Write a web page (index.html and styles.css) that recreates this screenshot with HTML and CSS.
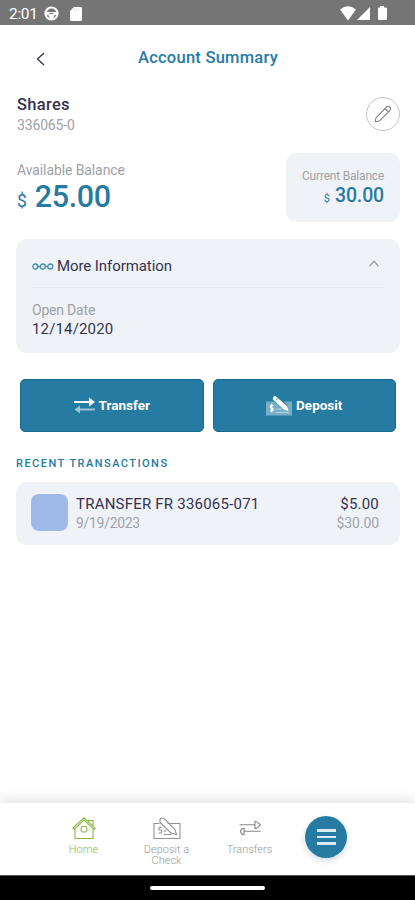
FILE: index.html
```html
<!DOCTYPE html>
<html lang="en">
<head>
<meta charset="utf-8">
<title>Account Summary</title>
<link rel="stylesheet" href="styles.css">
</head>
<body>
<div class="phone">
  <div class="status">
    <span class="clock">2:01</span>
    <svg class="wheel" width="15" height="15" viewBox="0 0 15 15"><circle cx="7.5" cy="7.5" r="6" fill="none" stroke="#fff" stroke-width="2.2"/><path d="M1 6h13v3H10.500L9 13H6L4.500 9H1z" fill="#fff"/><path d="M5.500 7.500h4" stroke="#757575"/></svg>
    <svg class="sd" width="12" height="14" viewBox="0 0 12 14"><path d="M4 0h7q1 0 1 1v12q0 1-1 1H1q-1 0-1-1V4z" fill="#fff"/><path d="M4.500 1.500v2M6.800 1.500v2M9 1.500v2" stroke="#ddd"/></svg>
    <svg class="signals" width="47" height="15" viewBox="0 0 47 15" fill="#fff"><path d="M0 3.500Q8-3 16 3.500L8 14.500z"/><path d="M30 1v13H17z"/><path d="M40 0h4v1.500h2q1 0 1 1V13q0 1-1 1h-7q-1 0-1-1V2.500q0-1 1-1h1z"/></svg>
  </div>
  <header class="header">
    <svg class="back" width="9" height="14" viewBox="0 0 9 14"><path d="M8 1L1.500 7 8 13" fill="none" stroke="#34324f" stroke-width="1.300"/></svg>
    <h1>Account Summary</h1>
  </header>
  <main>
    <section class="account">
      <div><h2>Shares</h2><p class="number">336065-0</p></div>
      <div class="edit"><svg width="18" height="18" viewBox="0 0 18 18" fill="none" stroke="#808080" stroke-width="1.100"><path d="M1.500 16.500q-.5-2.500.8-4L12.500 2q1.800-1.500 3.300 0t.2 3.400L6 15.300q-1.500 1.500-4.500 1.200zM11 3.500l3.500 3.500"/></svg></div>
    </section>
    <section class="balances">
      <div class="available"><p class="label">Available Balance</p><p class="amount"><span>$</span><b>25.00</b></p></div>
      <div class="current"><p class="label">Current Balance</p><p class="amount"><span>$</span><b>30.00</b></p></div>
    </section>
    <section class="info">
      <div class="info-head">
        <svg width="22" height="8" viewBox="0 0 22 8" fill="none" stroke="#438eb1" stroke-width="1.300"><circle cx="3.300" cy="4.500" r="2.500"/><circle cx="10.800" cy="4.500" r="2.500"/><circle cx="18.300" cy="4.500" r="2.500"/><path d="M5.800 4.500h2.500M13.300 4.500h2.500"/></svg>
        <h3>More Information</h3>
        <svg class="chevron" width="10" height="7" viewBox="0 0 10 7"><path d="M.7 6L5 1.200 9.300 6" fill="none" stroke="#92969b" stroke-width="1.200"/></svg>
      </div>
      <p class="label">Open Date</p><p class="date">12/14/2020</p>
    </section>
    <section class="actions">
      <div class="button"><svg width="21" height="17" viewBox="0 0 21 17"><path d="M0 4h15V.5L21 5l-6 4.500V6H0z" fill="#fff"/><path d="M21 11.500H6V8.500L.5 12.500 6 16.500v-3h15z" fill="#9fc4d5"/></svg><span>Transfer</span></div>
      <div class="button deposit"><svg width="26" height="21" viewBox="0 0 26 21"><path d="M0 6.500h26V20.500H0z" fill="#78aec6"/><path d="M10 14h6M10 17.500h13" stroke="#b8d5e2"/><path d="M7.500 10.500H5q-1.500 1.300 0 2.600h1.500q1.500 1.300 0 2.600H4M5.700 9v8.500" fill="none" stroke="#fff" stroke-width="1.200"/><path d="M9 3L20 13" stroke="#267ba2" stroke-width="6"/><path d="M7 2.500Q7.500.5 9.500 1L21 11l1.500 5-5-1.500L7.500 5Q6.500 4 7 2.500z" fill="#fff"/><path d="M9.500 5.500l2.500-2.300" stroke="#78aec6"/></svg><span>Deposit</span></div>
    </section>
    <h4>RECENT TRANSACTIONS</h4>
    <section class="transaction">
      <div class="swatch"></div>
      <div class="details"><p class="name">TRANSFER FR 336065-071</p><p class="sub">9/19/2023</p></div>
      <div class="values"><p class="name">$5.00</p><p class="sub">$30.00</p></div>
    </section>
  </main>
  <nav>
    <div class="tab home"><svg width="24" height="23" viewBox="0 0 24 23" fill="none" stroke="#86b941" stroke-width="1.100"><path d="M.8 11.200L12 .8 23.200 11.200l-1.200 1.100L12 3 2 12.300zM3 11.500v10h18v-10M16.500 4.500V3.500h4.500v5"/><rect x="9.200" y="9.500" width="5.600" height="5.500" rx="1.500"/></svg><span>Home</span></div>
    <div class="tab check"><svg width="28" height="23" viewBox="0 0 28 23" fill="none" stroke="#929292" stroke-width="1.100"><path d="M6.500 6.500H1v15h26v-15H14.500M7 3.500Q7 1 9 1t3 1.500l10 10 1.500 5-5.500-1.500L7.500 6q-1-1-.5-2.500zM8.500 10.500H6.500q-1.500 1.300 0 2.500h1.500q1.500 1.500 0 3H5.500M10.500 17.500h8M10.500 14h3"/></svg><span>Deposit a<br>Check</span></div>
    <div class="tab transfers"><svg width="22" height="16" viewBox="0 0 22 16" fill="none" stroke="#898989" stroke-width="1.100"><path d="M.5 4.800h15.500M16 1.200q2 0 5.300 3.600Q18 8.500 16 8.500zM21.500 11.300H5.500M5 8.300Q2.500 8 1.500 11.300 2.500 15 5 14.600z"/></svg><span>Transfers</span></div>
    <div class="menu"><i></i><i></i><i></i></div>
  </nav>
  <div class="gesture"><i></i></div>
</div>
</body>
</html>
```

FILE: styles.css
```css
* { box-sizing: border-box; }
body { margin: 0; background: #fff; font-family: Roboto, sans-serif; }
h1, h2, h3, h4, p { margin: 0; font-weight: 400; }
svg { display: block; flex: none; overflow: visible; }
.phone { width: 415px; height: 900px; display: flex; flex-direction: column; overflow: hidden; color: #34324f; }
.status { height: 25px; background: #757575; display: flex; align-items: center; padding: 2px 28px 0 9px; color: #fff; flex: none; }
.clock { font-size: 15.500px; width: 35px; letter-spacing: -.3px; }
.sd { margin-left: 11px; }
.signals { margin-left: auto; }
.header { display: grid; grid-template-columns: 37px 1fr 37px; height: 63px; align-items: center; flex: none; }
.back { justify-self: end; margin: 4px -8px 0 0; }
h1 { text-align: center; font-size: 16.500px; font-weight: 500; color: #267ba2; letter-spacing: .25px; padding: 1px 0 0 1px; }
main { padding: 0 15px 0 16px; flex: 1; }
.account { display: flex; justify-content: space-between; padding-left: 1px; height: 65px; }
.account h2 { font-size: 16.500px; line-height: 20px; font-weight: 500; margin-top: 7px; letter-spacing: .3px; }
.number { font-size: 14px; line-height: 20px; color: #a0a0a6; letter-spacing: -.15px; }
.edit { width: 34px; height: 34px; border: 1px solid #c4c4c4; border-radius: 50%; margin-top: 9px; display: grid; place-items: center; }
.balances { display: flex; justify-content: space-between; height: 69px; margin-bottom: 17px; padding-left: 1px; }
.label { color: #a0a2a6; }
.available .label { font-size: 14px; line-height: 20px; margin-top: 7px; letter-spacing: -.1px; }
.amount { color: #267ba2; display: flex; align-items: baseline; }
.amount b { font-weight: 500; }
.available .amount { line-height: 34px; font-size: 30.500px; gap: 8px; }
.available .amount b { letter-spacing: -.4px; }
.available .amount span { font-size: 17.500px; }
.current { width: 114px; background: #eff3f8; border-radius: 10px; padding: 16px 16px; }
.current .label { font-size: 12px; line-height: 15px; text-align: right; white-space: nowrap; letter-spacing: -.2px; }
.current .amount { justify-content: flex-end; font-size: 19.500px; line-height: 24px; gap: 5px; }
.current .amount b { letter-spacing: -.15px; }
.current .amount span { font-size: 11px; }
.info { height: 114px; border-radius: 11px; background: #eff3f8; padding: 0 16px; }
.info-head { height: 49px; display: flex; align-items: center; border-bottom: 1px solid #e5e9ed; padding-top: 5px; }
.info-head h3 { font-size: 15px; margin-left: 3px; letter-spacing: -.08px; padding-top: 1px; }
.chevron { margin: -5px 5px 0 auto; }
.info .label { font-size: 14px; line-height: 20px; margin-top: 12px; letter-spacing: -.2px; }
.date { font-size: 15px; line-height: 19px; letter-spacing: .15px; }
.actions { display: flex; gap: 9px; padding: 26px 4px 0; }
.button { flex: 1; height: 53px; border: 1px solid #17698f; border-radius: 5px; background: #267ba2; color: #fff; display: flex; align-items: center; justify-content: center; gap: 4px; font-size: 13.500px; font-weight: 700; }
.button span { padding-bottom: 2px; }
h4 { color: #267ba2; font-size: 11px; line-height: 16px; font-weight: 500; letter-spacing: 1.470px; margin: 24px 0 10px; }
.transaction { display: flex; background: #eff3f8; border-radius: 10px; height: 63px; padding: 12px 21px 0 15px; }
.swatch { width: 37px; height: 37px; border-radius: 8px; background: #9fb9e8; margin-right: 8px; }
.name { font-size: 15px; line-height: 20px; }
.details .name { letter-spacing: .22px; }
.sub { font-size: 14px; line-height: 18px; color: #a0a2aa; letter-spacing: -.1px; }
.details .sub { letter-spacing: -.3px; }
.values { margin-left: auto; text-align: right; }
.values .name { letter-spacing: .2px; }
nav { height: 72px; flex: none; display: flex; background: #fff; box-shadow: 0 -3px 12px rgba(0,0,0,.12); padding-left: 42px; }
.tab { width: 83px; display: flex; flex-direction: column; align-items: center; color: #999; font-size: 11px; line-height: 11px; text-align: center; font-weight: 300; padding-top: 14px; gap: 4px; }
.home { color: #86b941; }
.transfers svg { margin: 3px 0 4px; }
.menu { width: 42px; height: 42px; border-radius: 50%; background: #267ba2; margin: 13px 0 0 14px; box-shadow: 0 3px 6px rgba(38,70,110,.2); display: flex; flex-direction: column; align-items: center; justify-content: center; gap: 4px; }
.menu i { width: 19px; height: 2.500px; background: #dcebf2; }
.gesture { height: 25px; background: #000; border-top: 1px solid #555; flex: none; display: grid; place-items: center; }
.gesture i { width: 115px; height: 4px; border-radius: 2px; background: #fff; }
```
